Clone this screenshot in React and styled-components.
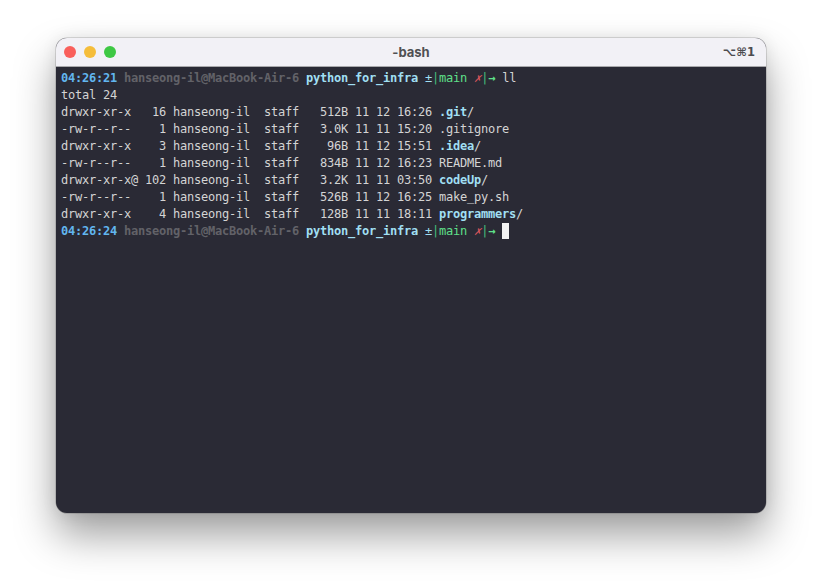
import React from "react";
import styled, { createGlobalStyle } from "styled-components";

const GlobalStyle = createGlobalStyle`
  html, body {
    margin: 0;
    background: #ffffff;
  }
  body {
    width: 822px;
    height: 587px;
    overflow: hidden;
  }
`;

const Page = styled.div`
  padding: 38px 56px 0;
  box-sizing: border-box;
  height: 587px;
`;

const Window = styled.div`
  width: 710px;
  height: 475px;
  display: flex;
  flex-direction: column;
  border-radius: 11px;
  overflow: hidden;
  background: #2a2a35;
  box-shadow: 0 0 0 0.5px rgba(0, 0, 0, 0.25), 0 22px 42px rgba(0, 0, 0, 0.38),
    0 0 16px rgba(0, 0, 0, 0.08);
`;

const TitleBar = styled.div`
  height: 28px;
  flex: none;
  display: flex;
  align-items: center;
  justify-content: space-between;
  position: relative;
  padding: 0 11px 0 8px;
  background: #f2f1f6;
  border-bottom: 1px solid #a9a9ac;
`;

const Lights = styled.div`
  display: flex;
  gap: 8px;
`;

const Light = styled.span`
  width: 12px;
  height: 12px;
  border-radius: 50%;
  background: ${(p) => p.$color};
`;

const Title = styled.div`
  position: absolute;
  left: 0;
  right: 0;
  text-align: center;
  font: 700 13px Inter, "Liberation Sans", sans-serif;
  color: #505053;
`;

const Shortcut = styled.div`
  font: 700 11.5px "DejaVu Sans", sans-serif;
  color: #4c4c50;
`;

const Terminal = styled.div`
  padding: 3px 5px 0;
  flex: 1;
  font-family: "DejaVu Sans Mono", monospace;
  font-size: 12px;
  letter-spacing: -0.224px;
  line-height: 17px;
  color: #d4d4d4;
`;

const Line = styled.div`
  height: 17px;
  white-space: pre;
`;

const Time = styled.span`
  color: #62b6f0;
  font-weight: 700;
`;

const Host = styled.span`
  color: #626268;
  font-weight: 700;
`;

const Bold = styled.span`
  color: #a0dff2;
  font-weight: 700;
`;

const Dirty = styled.span`
  color: #a0dff2;
`;

const Branch = styled.span`
  color: ${(p) => p.$color};
  font-weight: ${(p) => (p.$bold ? 700 : 400)};
`;

const Cross = styled.span`
  color: #d9555c;
  font-style: italic;
`;

const Cursor = styled.span`
  display: inline-block;
  width: 7px;
  height: 16px;
  vertical-align: top;
  background: #f2f2f2;
`;

const files = [
  ["drwxr-xr-x   16 hanseong-il  staff   512B 11 12 16:26 ", ".git", true],
  ["-rw-r--r--    1 hanseong-il  staff   3.0K 11 11 15:20 ", ".gitignore"],
  ["drwxr-xr-x    3 hanseong-il  staff    96B 11 12 15:51 ", ".idea", true],
  ["-rw-r--r--    1 hanseong-il  staff   834B 11 12 16:23 ", "README.md"],
  ["drwxr-xr-x@ 102 hanseong-il  staff   3.2K 11 11 03:50 ", "codeUp", true],
  ["-rw-r--r--    1 hanseong-il  staff   526B 11 12 16:25 ", "make_py.sh"],
  ["drwxr-xr-x    4 hanseong-il  staff   128B 11 11 18:11 ", "programmers", true],
];

function Prompt({ time }) {
  return (
    <>
      <Time>{time + " "}</Time>
      <Host>{"hanseong-il@MacBook-Air-6 "}</Host>
      <Bold>{"python_for_infra "}</Bold>
      <Dirty>±</Dirty>
      <Branch $color="#45c07e">|</Branch>
      <Branch $color="#5fe08a">{"main "}</Branch>
      <Cross>{"✗"}</Cross>
      <Branch $color="#45c07e">|</Branch>
      <Branch $color="#5fe08a" $bold>{"→ "}</Branch>
    </>
  );
}

export default function App() {
  return (
    <Page>
      <GlobalStyle />
      <Window>
        <TitleBar>
          <Lights>
            <Light $color="#f95f5b" />
            <Light $color="#f5bd3a" />
            <Light $color="#3ec844" />
          </Lights>
          <Title>-bash</Title>
          <Shortcut>⌥⌘1</Shortcut>
        </TitleBar>
        <Terminal>
          <Line>
            <Prompt time="04:26:21" />
            <span>ll</span>
          </Line>
          <Line>total 24</Line>
          {files.map(([meta, name, isDir]) => (
            <Line key={name}>
              <span>{meta}</span>
              {isDir ? (
                <>
                  <Bold>{name}</Bold>
                  <span>/</span>
                </>
              ) : (
                <span>{name}</span>
              )}
            </Line>
          ))}
          <Line>
            <Prompt time="04:26:24" />
            <Cursor />
          </Line>
        </Terminal>
      </Window>
    </Page>
  );
}
